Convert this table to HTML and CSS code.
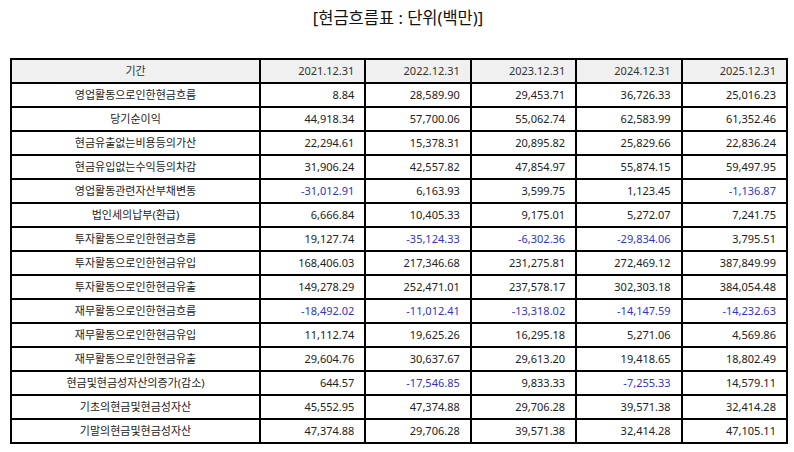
FILE: index.html
```html
<!DOCTYPE html>
<html lang="ko">
<head>
<meta charset="utf-8">
<link rel="stylesheet" href="styles.css">
</head>
<body>
<div class="page">
  <h1 class="title">[현금흐름표 : 단위(백만)]</h1>
  <table class="cf">
    <colgroup>
      <col class="c-label"><col class="c-num"><col class="c-num"><col class="c-num"><col class="c-num"><col class="c-num">
    </colgroup>
    <thead>
      <tr><th class="lbl">기간</th><th>2021.12.31</th><th>2022.12.31</th><th>2023.12.31</th><th>2024.12.31</th><th>2025.12.31</th></tr>
    </thead>
    <tbody>
      <tr><td class="lbl">영업활동으로인한현금흐름</td><td>8.84</td><td>28,589.90</td><td>29,453.71</td><td>36,726.33</td><td>25,016.23</td></tr>
      <tr><td class="lbl">당기순이익</td><td>44,918.34</td><td>57,700.06</td><td>55,062.74</td><td>62,583.99</td><td>61,352.46</td></tr>
      <tr><td class="lbl">현금유출없는비용등의가산</td><td>22,294.61</td><td>15,378.31</td><td>20,895.82</td><td>25,829.66</td><td>22,836.24</td></tr>
      <tr><td class="lbl">현금유입없는수익등의차감</td><td>31,906.24</td><td>42,557.82</td><td>47,854.97</td><td>55,874.15</td><td>59,497.95</td></tr>
      <tr><td class="lbl">영업활동관련자산부채변동</td><td class="neg">-31,012.91</td><td>6,163.93</td><td>3,599.75</td><td>1,123.45</td><td class="neg">-1,136.87</td></tr>
      <tr><td class="lbl">법인세의납부(환급)</td><td>6,666.84</td><td>10,405.33</td><td>9,175.01</td><td>5,272.07</td><td>7,241.75</td></tr>
      <tr><td class="lbl">투자활동으로인한현금흐름</td><td>19,127.74</td><td class="neg">-35,124.33</td><td class="neg">-6,302.36</td><td class="neg">-29,834.06</td><td>3,795.51</td></tr>
      <tr><td class="lbl">투자활동으로인한현금유입</td><td>168,406.03</td><td>217,346.68</td><td>231,275.81</td><td>272,469.12</td><td>387,849.99</td></tr>
      <tr><td class="lbl">투자활동으로인한현금유출</td><td>149,278.29</td><td>252,471.01</td><td>237,578.17</td><td>302,303.18</td><td>384,054.48</td></tr>
      <tr><td class="lbl">재무활동으로인한현금흐름</td><td class="neg">-18,492.02</td><td class="neg">-11,012.41</td><td class="neg">-13,318.02</td><td class="neg">-14,147.59</td><td class="neg">-14,232.63</td></tr>
      <tr><td class="lbl">재무활동으로인한현금유입</td><td>11,112.74</td><td>19,625.26</td><td>16,295.18</td><td>5,271.06</td><td>4,569.86</td></tr>
      <tr><td class="lbl">재무활동으로인한현금유출</td><td>29,604.76</td><td>30,637.67</td><td>29,613.20</td><td>19,418.65</td><td>18,802.49</td></tr>
      <tr><td class="lbl">현금및현금성자산의증가(감소)</td><td>644.57</td><td class="neg">-17,546.85</td><td>9,833.33</td><td class="neg">-7,255.33</td><td>14,579.11</td></tr>
      <tr><td class="lbl">기초의현금및현금성자산</td><td>45,552.95</td><td>47,374.88</td><td>29,706.28</td><td>39,571.38</td><td>32,414.28</td></tr>
      <tr><td class="lbl">기말의현금및현금성자산</td><td>47,374.88</td><td>29,706.28</td><td>39,571.38</td><td>32,414.28</td><td>47,105.11</td></tr>
    </tbody>
  </table>
</div>
</body>
</html>
```

FILE: styles.css
```css
html, body {
  margin: 0;
  padding: 0;
  background: #ffffff;
}
body {
  font-family: "Noto Sans", "Noto Sans CJK KR", sans-serif;
  color: #222222;
}
.page {
  padding: 6px 8px 0 10px;
}
.title {
  margin: 0;
  height: 24px;
  line-height: 24px;
  font-size: 16.5px;
  font-weight: 400;
  text-align: center;
  color: #111111;
}
.cf {
  margin-top: 28px;
  width: 776px;
  table-layout: fixed;
  border-collapse: separate;
  border-spacing: 0;
  border: 1px solid #000000;
  font-size: 11px;
}
.c-label { width: 249px; }
.c-num { width: 105.4px; }
.cf th, .cf td {
  border: 1px solid #000000;
  height: 22px;
  padding: 0 10px 0 6px;
  line-height: 22px;
  text-align: right;
  font-weight: 400;
  white-space: nowrap;
  color: #222222;
}
.cf th {
  background: #f0f0f0;
  color: #333333;
}
.cf .lbl {
  text-align: center;
  padding: 0 4px;
}
.cf .neg {
  color: #3333cc;
}
```
